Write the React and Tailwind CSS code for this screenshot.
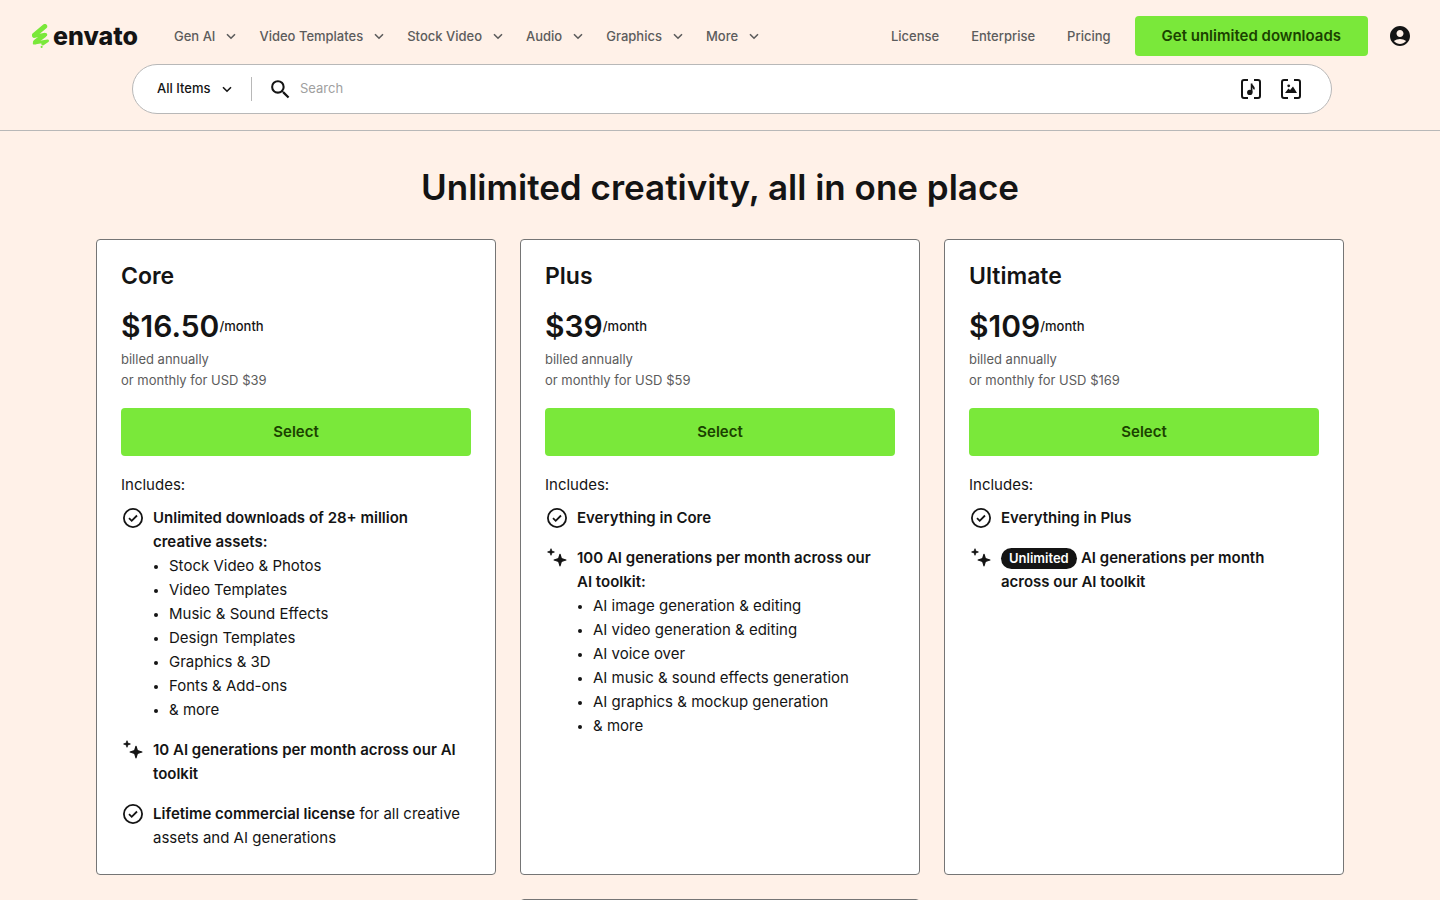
import { MdAccountCircle, MdSearch } from 'react-icons/md'

const NAV = ['Gen AI', 'Video Templates', 'Stock Video', 'Audio', 'Graphics', 'More']
const LINKS = ['License', 'Enterprise', 'Pricing']

const PLANS = [
  {
    name: 'Core',
    price: '$16.50',
    monthly: '$39',
    features: [
      {
        icon: 'check',
        bold: 'Unlimited downloads of 28+ million creative assets:',
        items: [
          'Stock Video & Photos',
          'Video Templates',
          'Music & Sound Effects',
          'Design Templates',
          'Graphics & 3D',
          'Fonts & Add-ons',
          '& more',
        ],
      },
      { icon: 'sparkle', bold: '10 AI generations per month across our AI toolkit' },
      { icon: 'check', bold: 'Lifetime commercial license', rest: ' for all creative assets and AI generations' },
    ],
  },
  {
    name: 'Plus',
    price: '$39',
    monthly: '$59',
    features: [
      { icon: 'check', bold: 'Everything in Core' },
      {
        icon: 'sparkle',
        bold: '100 AI generations per month across our AI toolkit:',
        items: [
          'AI image generation & editing',
          'AI video generation & editing',
          'AI voice over',
          'AI music & sound effects generation',
          'AI graphics & mockup generation',
          '& more',
        ],
      },
    ],
  },
  {
    name: 'Ultimate',
    price: '$109',
    monthly: '$169',
    features: [
      { icon: 'check', bold: 'Everything in Plus' },
      { icon: 'sparkle', pill: 'Unlimited', bold: 'AI generations per month across our AI toolkit' },
    ],
  },
]

function Chevron() {
  return (
    <svg viewBox="0 0 16 16" className="size-4 shrink-0" fill="none" stroke="currentColor" strokeWidth="1.6" aria-hidden="true">
      <path d="M4 6.2l4 4 4-4" />
    </svg>
  )
}

function Logo() {
  return (
    <a href="#" className="flex items-center gap-1 text-[#141414]">
      <svg viewBox="0 0 17 24" className="h-6 w-[17px]" fill="none" stroke="#7ae83a" strokeLinecap="round" strokeLinejoin="round" aria-hidden="true">
        <path d="M12.8 2.4L2.4 11.2" strokeWidth="4.8" />
        <path d="M2 12L13.6 10.6" strokeWidth="3.4" />
        <path d="M12.4 11.2L3.4 17.8" strokeWidth="4.6" />
        <path d="M2.2 19.2L15.6 16.8L10.8 20" strokeWidth="2.8" />
        <path d="M9.6 22.8v.1" strokeWidth="2" />
      </svg>
      <span className="text-[25px] leading-6 font-extrabold">envato</span>
    </a>
  )
}

function FeatureIcon({ type }) {
  if (type === 'check') {
    return (
      <svg viewBox="0 0 24 24" className="size-6 shrink-0" fill="none" stroke="currentColor" aria-hidden="true">
        <circle cx="12" cy="12" r="9.1" strokeWidth="1.8" />
        <path d="M8 12.2l2.7 2.6 5.3-5.3" strokeWidth="1.8" />
      </svg>
    )
  }
  return (
    <svg viewBox="0 0 24 24" className="size-6 shrink-0" fill="currentColor" stroke="currentColor" strokeLinejoin="round" aria-hidden="true">
      <path d="M15 8.3l1.4 4.3 4.5 1.4-4.5 1.4-1.4 4.5-1.4-4.5-4.5-1.4 4.5-1.4z" strokeWidth="1.2" />
      <path d="M6 2.7l.8 2.4 2.6.9-2.6.9L6 9.3l-.8-2.4L2.6 6l2.6-.9z" strokeWidth=".8" />
    </svg>
  )
}

function Header() {
  return (
    <header className="border-b border-[#b8b8b8] pb-4">
      <div className="flex items-center pt-4 pr-7 pl-8">
        <Logo />
        <nav className="ml-9 flex items-center gap-5">
          {NAV.map(label => (
            <button key={label} className="flex items-center gap-2 text-[13px] leading-5 font-medium text-[#5c5c5c]">
              {label}
              <Chevron />
            </button>
          ))}
        </nav>
        <div className="ml-auto flex items-center gap-8 text-[13px] leading-5 font-medium text-[#5c5c5c]">
          {LINKS.map(label => (
            <a key={label} href="#">{label}</a>
          ))}
        </div>
        <button className="ml-6 h-10 rounded bg-[#7ae83a] px-[27px] text-[15px] font-semibold text-[#1a4200]">
          Get unlimited downloads
        </button>
        <button aria-label="Account" className="ml-5 text-[#141414]">
          <MdAccountCircle size={24} />
        </button>
      </div>

      <div className="pl-6">
        <form className="mx-auto mt-2 flex h-[50px] max-w-[1200px] items-center rounded-full border border-[#b8b8b8] bg-white px-6 text-[#141414]">
          <div className="relative flex items-center text-[13px] font-medium">
            <select aria-label="Category" className="appearance-none pr-6">
              <option>All Items</option>
            </select>
            <span className="pointer-events-none absolute right-0"><Chevron /></span>
          </div>
          <span className="ml-4 h-6 w-px bg-[#b8b8b8]" />
          <label htmlFor="search" className="ml-4"><MdSearch size={25} /></label>
          <input id="search" placeholder="Search" className="ml-[7px] min-w-0 flex-1 text-[13px] outline-none placeholder:text-[#a0a0a0]" />
          <button type="button" aria-label="Search by audio" className="mr-4">
            <svg viewBox="0 0 24 24" className="size-6" fill="none" stroke="currentColor" strokeWidth="2" aria-hidden="true">
              <path d="M9 3H5a2 2 0 0 0-2 2v14a2 2 0 0 0 2 2h4M15 3h4a2 2 0 0 1 2 2v14a2 2 0 0 1-2 2h-4" />
              <path d="M12.6 6.5v9M12.6 7.4c.4 2 2.6 1.8 2.4 5" strokeWidth="1.7" />
              <circle cx="10.8" cy="15.4" r="2.7" fill="currentColor" stroke="none" />
            </svg>
          </button>
          <button type="button" aria-label="Search by image" className="mr-1">
            <svg viewBox="0 0 24 24" className="size-6" fill="none" stroke="currentColor" strokeWidth="2" aria-hidden="true">
              <path d="M9 3H5a2 2 0 0 0-2 2v14a2 2 0 0 0 2 2h4M15 3h4a2 2 0 0 1 2 2v14a2 2 0 0 1-2 2h-4" />
              <path d="M6 16l3.4-4.4 1.7 1.4 2.9-3.6L18 16z" fill="currentColor" stroke="none" />
              <circle cx="9.7" cy="8.8" r="1.4" fill="currentColor" stroke="none" />
            </svg>
          </button>
        </form>
      </div>
    </header>
  )
}

function Feature({ feature }) {
  return (
    <li className="flex gap-2 pr-2">
      <FeatureIcon type={feature.icon} />
      <div>
        <p>
          {feature.pill && (
            <>
              <span className="inline-block rounded-full bg-[#141414] px-2 text-[13px] leading-[21px] font-semibold text-white">{feature.pill}</span>{' '}
            </>
          )}
          <strong className="font-semibold">{feature.bold}</strong>
          {feature.rest}
        </p>
        {feature.items && (
          <ul className="list-disc pl-4 marker:text-[12px]">
            {feature.items.map(item => (
              <li key={item}>{item}</li>
            ))}
          </ul>
        )}
      </div>
    </li>
  )
}

function PlanCard({ plan }) {
  return (
    <section className="rounded border border-[#757575] bg-white p-6">
      <h2 className="text-[23px] leading-6 font-semibold">{plan.name}</h2>
      <p className="mt-4 flex items-center leading-[45px]">
        <span className="text-[30px] font-semibold">{plan.price}</span>
        <span className="text-[13px] font-medium">/month</span>
      </p>
      <p className="text-[13px] leading-[21px] text-[#5c5c5c]">
        billed annually
        <br />
        or monthly for USD {plan.monthly}
      </p>
      <button className="mt-[17px] h-12 w-full rounded bg-[#7ae83a] text-[15px] font-semibold text-[#1a4200]">Select</button>
      <p className="mt-4 text-[15px] leading-[26px]">Includes:</p>
      <ul className="mt-2 space-y-4 text-[15px] leading-6">
        {plan.features.map(feature => (
          <Feature key={feature.bold} feature={feature} />
        ))}
      </ul>
    </section>
  )
}

export default function App() {
  return (
    <div className="min-h-screen bg-[#fff1e8] font-['Inter',sans-serif] text-[#141414]">
      <Header />
      <main className="mx-auto max-w-[1296px] px-6 pt-8 pb-16">
        <h1 className="text-center text-[35px] leading-[48px] font-semibold">Unlimited creativity, all in one place</h1>
        <div className="mt-7 grid grid-cols-3 gap-6">
          {PLANS.map(plan => (
            <PlanCard key={plan.name} plan={plan} />
          ))}
          <section className="col-start-2 h-80 rounded border border-[#757575] bg-white" />
        </div>
      </main>
    </div>
  )
}
